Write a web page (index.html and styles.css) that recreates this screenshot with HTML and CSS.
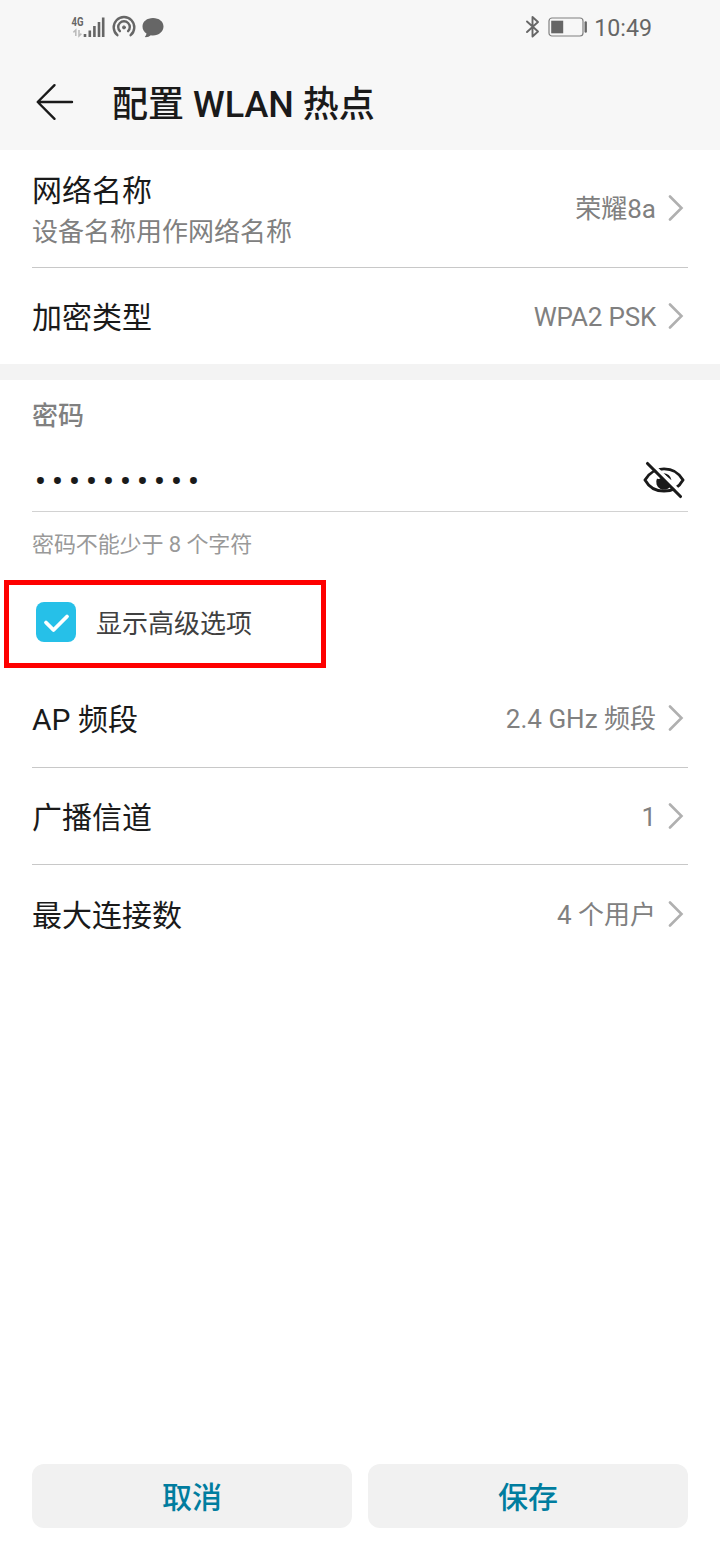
FILE: index.html
```html
<!DOCTYPE html>
<html lang="zh-CN">
<head>
<meta charset="utf-8">
<title>配置 WLAN 热点</title>
<link rel="stylesheet" href="styles.css">
</head>
<body>
<div class="screen">
  <header class="top">
    <div class="status">
      <div class="status-left">
        <svg width="36" height="28" viewBox="0 0 36 28">
          <path d="M15 24v-3M19.800 24v-6.500M24.400 24v-11M29 24v-15M33.200 24V4.500" fill="none" stroke="#666" stroke-width="2.600"/>
          <path d="M5.800 23v-6l-2.400 2.400M9 17v6l2.400-2.400" fill="none" stroke="#bbb" stroke-width="1.500"/>
          <text x="1.500" y="12.500" class="net" textLength="12" lengthAdjust="spacingAndGlyphs">4G</text>
        </svg>
        <svg class="hotspot" width="24" height="24" viewBox="0 0 24 24" fill="none" stroke="#666" stroke-width="2.400" stroke-linecap="round">
          <path d="M5.400 20.200A10.300 10.300 0 1 1 18.600 20.200"/><path d="M7.900 16.200A5.800 5.800 0 1 1 16.100 16.200"/><circle cx="12" cy="12.400" r="1.500" fill="#666" stroke-width="1"/>
        </svg>
        <svg class="chat" width="24" height="24" viewBox="0 0 24 24"><path d="M12 3C6 3 1.500 6.500 1.500 11.500c0 3 1.600 5.400 4 7-.1 1.300-.7 2.500-1.700 3.600 2.500.2 4.500-.5 6-1.900.7.1 1.500.2 2.200.2 6 0 10.500-3.900 10.500-8.900S18 3 12 3z" fill="#666"/></svg>
      </div>
      <div class="status-right">
        <svg width="16" height="26" viewBox="0 0 16 26" fill="none" stroke="#666" stroke-width="1.900" stroke-linejoin="round" stroke-linecap="round"><path d="M2 7.500l11 10-5.500 5V3l5.500 5-11 10"/></svg>
        <svg class="battery" width="40" height="22" viewBox="0 0 40 22"><rect x="1" y="2" width="34" height="18" rx="3" fill="none" stroke="#808080" stroke-width="1.200"/><rect x="3.200" y="4.700" width="12" height="12.600" fill="#666"/><path d="M37.700 6.500v9" stroke="#666" stroke-width="2.400" stroke-linecap="round"/></svg>
        <span class="time">10:49</span>
      </div>
    </div>
    <div class="titlebar">
      <svg class="back" width="40" height="40" viewBox="0 0 40 40" fill="none" stroke="#1a1a1a" stroke-width="2.400" stroke-linecap="round" stroke-linejoin="round"><path d="M37 20H3M19.500 3.200L2.700 20l16.800 16.800"/></svg>
      <h1 class="title">配置 WLAN 热点</h1>
    </div>
  </header>

  <section class="group">
    <div class="row row-tall">
      <div class="names"><div class="label">网络名称</div><div class="sub">设备名称用作网络名称</div></div>
      <div class="value">荣耀8a</div>
      <svg class="chev" viewBox="0 0 16 26"><path d="M2 1.500L13.500 13 2 24.500"/></svg>
    </div>
    <div class="row row-enc">
      <div class="label">加密类型</div><div class="value value-latin">WPA2 PSK</div>
      <svg class="chev" viewBox="0 0 16 26"><path d="M2 1.500L13.500 13 2 24.500"/></svg>
    </div>
  </section>
  <div class="band"></div>

  <section class="password">
    <div class="pw-title">密码</div>
    <div class="pw-field">
      <div class="dots"><span>•</span><span>•</span><span>•</span><span>•</span><span>•</span><span>•</span><span>•</span><span>•</span><span>•</span><span>•</span></div>
      <svg width="42" height="40" viewBox="0 0 42 40" fill="none" stroke="#1a1a1a" stroke-width="2.800" stroke-linecap="round">
        <path d="M2 20C6 12.800 13 8.800 21 8.800S36 12.800 40 20C36 27.200 29 31.200 21 31.200S6 27.200 2 20z"/>
        <path d="M14 18.500q3 1.500 4.500-1.500l9.500 8.500a7.500 7.500 0 0 1-14-7zM20 13.200a8 8 0 0 1 8.500 7z" fill="#1a1a1a" stroke="none"/>
        <path d="M8 3L40 35" stroke="#fff" stroke-width="3.200"/>
        <path d="M4.500 3.500L37.500 36.500" stroke-width="3.100"/>
      </svg>
    </div>
    <div class="hint">密码不能少于 8 个字符</div>
  </section>

  <div class="advanced">
    <svg width="40" height="40" viewBox="0 0 40 40"><rect width="40" height="40" rx="8" fill="#26c0e8"/><path d="M10 20.500l7.500 7.500L31 14.500" fill="none" stroke="#fff" stroke-width="3.800" stroke-linecap="round" stroke-linejoin="round"/></svg>
    <span class="adv-label">显示高级选项</span>
  </div>

  <section class="group">
    <div class="row row-ap">
      <div class="label">AP 频段</div><div class="value">2.4 GHz 频段</div>
      <svg class="chev" viewBox="0 0 16 26"><path d="M2 1.500L13.500 13 2 24.500"/></svg>
    </div>
    <div class="row row-chan">
      <div class="label">广播信道</div><div class="value">1</div>
      <svg class="chev" viewBox="0 0 16 26"><path d="M2 1.500L13.500 13 2 24.500"/></svg>
    </div>
    <div class="row row-max">
      <div class="label">最大连接数</div><div class="value">4 个用户</div>
      <svg class="chev" viewBox="0 0 16 26"><path d="M2 1.500L13.500 13 2 24.500"/></svg>
    </div>
  </section>

  <footer class="actions">
    <button class="btn">取消</button>
    <button class="btn">保存</button>
  </footer>
</div>
</body>
</html>
```
FILE: styles.css
```css
* { box-sizing: border-box; }
body { margin: 0; background: #fff; font-family: Roboto, "Noto Sans CJK SC", sans-serif; color: #1a1a1a; }
svg { display: block; flex: none; }
.screen { width: 720px; height: 1560px; display: flex; flex-direction: column; }
.top { height: 150px; background: #f7f7f7; flex: none; }
.status { height: 54px; padding: 0 68px 0 70px; display: flex; justify-content: space-between; align-items: center; }
.status-left, .status-right { display: flex; align-items: center; }
.net { font: bold 12px Roboto, sans-serif; fill: #666; }
.hotspot { margin-left: 6px; }
.chat { margin-left: 5px; }
.battery { margin: 0 6px 0 7px; }
.time { font-size: 23.2px; line-height: 28px; color: #666; padding-top: 1px; }
.titlebar { height: 97px; padding: 0 0 0 35px; display: flex; align-items: center; gap: 37px; }
.back { margin-bottom: 2px; }
.title { margin: 0; font-size: 36px; line-height: 50px; font-weight: 500; padding-top: 4px; }
.group { padding: 0 32px; }
.row { display: flex; align-items: center; border-bottom: 1px solid #c8c8c8; }
.row:last-child { border-bottom: 0; }
.row-tall { height: 118px; }
.row-enc { height: 96px; }
.row-ap { height: 97px; }
.row-chan { height: 97px; }
.row-max { height: 99px; }
.label { font-size: 30px; line-height: 40px; padding-top: 3px; }
.row-ap .label { padding-top: 1px; }
.sub { font-size: 26px; line-height: 36px; color: #808080; margin-top: 3px; }
.names { padding-top: 0; }
.value { margin-left: auto; font-size: 26px; line-height: 36px; color: #808080; padding-top: 2px; }
.row-tall .value, .row-ap .value, .row-max .value { padding-top: 0; }
.value-latin { letter-spacing: -0.2px; }
.chev { width: 16px; height: 26px; margin: 0 4px 0 12px; fill: none; stroke: #b0b0b0; stroke-width: 2.6; stroke-linecap: round; }
.row-tall .chev, .row-ap .chev, .row-max .chev { margin-bottom: 2px; }
.band { height: 16px; background: #f3f3f3; flex: none; }
.password { padding: 17px 32px 0; height: 194px; flex: none; }
.pw-title { font-size: 26px; line-height: 38px; font-weight: 500; color: #808080; }
.pw-field { height: 77px; display: flex; justify-content: space-between; align-items: center; border-bottom: 1px solid #d2d2d2; padding-right: 3px; padding-top: 13px; }
.dots { display: grid; grid-template-columns: repeat(10, 17px); font-size: 34px; line-height: 30px; text-align: center; padding-top: 3px; }
.hint { font-size: 22px; line-height: 32px; color: #999; margin-top: 17px; letter-spacing: -0.1px; }
.advanced { flex: none; margin: 6px 0 3px 4px; width: 322px; height: 88px; border: 5px solid #fe0000; padding-left: 27px; display: flex; align-items: center; gap: 20px; padding-bottom: 4px; }
.adv-label { font-size: 26px; line-height: 38px; color: #404040; padding-top: 3px; }
.actions { margin-top: auto; padding: 0 32px 32px; display: grid; grid-template-columns: 1fr 1fr; gap: 16px; }
.btn { height: 64px; border: 0; border-radius: 12px; background: #f1f1f1; color: #007d9f; font: 500 30px/40px Roboto, "Noto Sans CJK SC", sans-serif; padding: 3px 0 0; }
```
